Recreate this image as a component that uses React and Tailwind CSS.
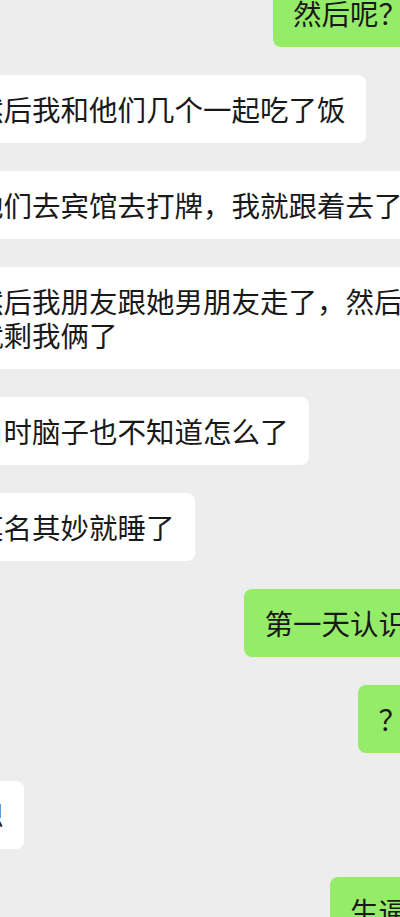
const messages = [
  { from: "me", text: "然后呢？" },
  { from: "them", text: "然后我和他们几个一起吃了饭" },
  { from: "them", text: "他们去宾馆去打牌，我就跟着去了" },
  { from: "them", text: "然后我朋友跟她男朋友走了，然后就剩我俩了" },
  { from: "them", text: "当时脑子也不知道怎么了" },
  { from: "them", text: "莫名其妙就睡了" },
  { from: "me", text: "第一天认识" },
  { from: "me", text: "？" },
  { from: "them", text: "嗯" },
  { from: "me", text: "生逼" },
];

function Bubble({ from, text }) {
  const mine = from === "me";
  return (
    <div className={mine ? "flex justify-end" : "flex justify-start"}>
      <div
        className={
          mine
            ? "max-w-[468px] rounded-lg bg-[#95ec69] px-5 py-[17px] text-[28.5px] leading-[34px] text-[#191919]"
            : "max-w-[468px] rounded-lg bg-white px-5 py-[17px] text-[28.5px] leading-[34px] text-[#191919]"
        }
      >
        {text}
      </div>
    </div>
  );
}

export default function App() {
  return (
    <div className="w-[400px] h-[917px] overflow-hidden bg-[#ededed] font-['Noto_Sans_CJK_SC','Noto_Sans',sans-serif]">
      {/* 聊天记录 */}
      <div className="flex flex-col gap-[28px] -mt-[21px] -ml-[45px] -mr-[27px]">
        {messages.map((m, i) => (
          <Bubble key={i} from={m.from} text={m.text} />
        ))}
      </div>
    </div>
  );
}
